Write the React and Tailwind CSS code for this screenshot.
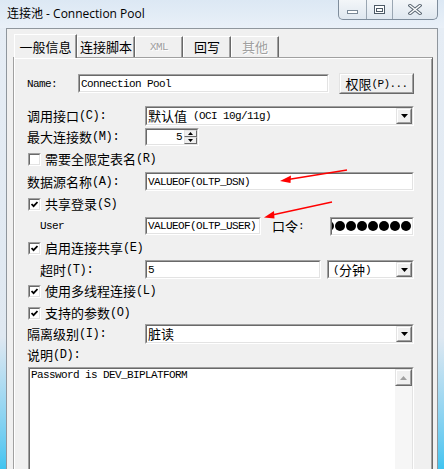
import React from "react";

const SUNKEN_OUT = "border border-t-[#a0a0a0] border-l-[#a0a0a0] border-b-white border-r-white";
const SUNKEN_IN = "border border-t-[#696969] border-l-[#696969] border-b-[#e3e3e3] border-r-[#e3e3e3]";
const RAISED_OUT = "border border-t-[#e3e3e3] border-l-[#e3e3e3] border-b-[#696969] border-r-[#696969]";
const RAISED_IN = "border border-t-white border-l-white border-b-[#a0a0a0] border-r-[#a0a0a0]";

const ZH = "text-[13px] leading-[16px] font-['Noto_Sans_CJK_SC',sans-serif]";
const EN = "text-[11px] leading-[16px] tracking-[-0.6px] font-['Liberation_Mono',monospace]";

function Lbl({ zh, tail }) {
  return (
    <span className="flex items-center whitespace-nowrap">
      <span className={ZH}>{zh}</span>
      <span className="text-[12px] leading-[16px] tracking-[-0.4px] font-['Liberation_Mono',monospace]">{tail}</span>
    </span>
  );
}

function Field({ className = "", inner = "", children }) {
  return (
    <div className={`${SUNKEN_OUT} shrink-0 ${className}`}>
      <div className={`h-full ${SUNKEN_IN} bg-white flex items-center overflow-hidden ${inner}`}>
        {children}
      </div>
    </div>
  );
}

function DropBtn() {
  return (
    <div className={`ml-auto w-[16px] h-full ${RAISED_OUT} bg-[#f0f0f0] shrink-0`}>
      <div className={`h-full ${RAISED_IN} flex items-center justify-center`}>
        <svg width="7" height="4" viewBox="0 0 7 4">
          <path d="M0 0h7L3.5 4z" fill="#000" />
        </svg>
      </div>
    </div>
  );
}

function Check({ checked }) {
  return (
    <Field className="w-[13px] h-[13px]" inner="justify-center">
      {checked && (
        <svg width="7" height="7" viewBox="0 0 7 7">
          <path d="M0.5 3 L2.6 5.2 L6.5 1" stroke="#000" strokeWidth="1.8" fill="none" />
        </svg>
      )}
    </Field>
  );
}

function CheckRow({ zh, tail, checked }) {
  return (
    <div className="h-[22px] flex items-center pl-[1px]">
      <Check checked={checked} />
      <span className="ml-[4px]">
        <Lbl zh={zh} tail={tail} />
      </span>
    </div>
  );
}

function Tab({ children, active, disabled, className = "" }) {
  return (
    <div
      className={`${className} flex items-center justify-center border-t border-l border-white border-r border-r-[#696969] shadow-[inset_-1px_0_0_#a0a0a0] bg-[#f0f0f0] ${
        active ? "h-[24px] -mb-[1px] z-10" : "h-[21px]"
      } ${disabled ? "text-[#a0a0a0]" : "text-black"}`}
    >
      {children}
    </div>
  );
}

export default function App() {
  return (
    <div className="relative w-[444px] h-[469px] overflow-hidden flex flex-col bg-[#e3ecf5] text-black">
      {/* title bar */}
      <div className="h-[28px] shrink-0 flex items-start bg-gradient-to-b from-[#dce8f4] to-[#e9f0f8]">
        <div className="pl-[7px] pt-[6px] text-[12px] leading-[16px] font-['Open_Sans','Noto_Sans_CJK_SC',sans-serif]">
          连接池 - Connection Pool
        </div>
        <div className="ml-auto mr-[6px] flex h-[20px] border border-t-0 border-[#7f8d9c] rounded-b-[5px] overflow-hidden bg-gradient-to-b from-[#f3f6f9] to-[#dfe7ef]">
          <div className="w-[28px] flex items-center justify-center border-r border-[#9aa6b2]">
            <svg width="11" height="5" viewBox="0 0 11 5" className="mt-[6px]">
              <rect x="0.5" y="0.5" width="10" height="3" fill="#fff" stroke="#7a8896" />
            </svg>
          </div>
          <div className="w-[26px] flex items-center justify-center border-r border-[#9aa6b2]">
            <svg width="11" height="9" viewBox="0 0 11 9">
              <rect x="0.5" y="0.5" width="10" height="8" fill="#fff" stroke="#4d5a66" />
              <rect x="2.5" y="3.5" width="6" height="3" fill="#fff" stroke="#4d5a66" />
            </svg>
          </div>
          <div className="w-[44px] flex items-center justify-center">
            <svg width="14" height="11" viewBox="0 0 14 11">
              <path d="M2 1.5 L12 9.5 M12 1.5 L2 9.5" stroke="#5c6874" strokeWidth="3.4" strokeLinecap="square" />
              <path d="M2 1.5 L12 9.5 M12 1.5 L2 9.5" stroke="#fff" strokeWidth="1.4" strokeLinecap="square" />
            </svg>
          </div>
        </div>
      </div>

      {/* body */}
      <div className="flex-1 flex min-h-0">
        <div className="w-[6px] shrink-0 bg-gradient-to-b from-[#e6edf5] via-[#dfe8f1] via-70% to-[#3ec4f0]" />

        <div className="w-[432px] shrink-0 bg-[#f0f0f0] border-x border-t border-[#8f969d] pt-[5px]">
          {/* tabs */}
          <div className="relative z-10 h-[23px] flex items-end ml-[7px]">
            <Tab active className={`w-[63px] ${ZH}`}>一般信息</Tab>
            <Tab className={`w-[58px] ${ZH}`}>连接脚本</Tab>
            <Tab disabled className={`w-[48px] ${EN} [text-shadow:1px_1px_0_#fff]`}>XML</Tab>
            <Tab className={`w-[48px] ${ZH}`}>回写</Tab>
            <Tab disabled className={`w-[48px] ${ZH} [text-shadow:1px_1px_0_#fff]`}>其他</Tab>
          </div>

          {/* panel */}
          <div className="ml-[6px] w-[420px] h-[430px] border border-t-[#a0a0a0] border-l-[#a0a0a0] border-b-[#696969] border-r-[#696969] shadow-[inset_1px_1px_0_#fff,inset_-1px_-1px_0_#a0a0a0] pl-[13px] pt-[16px] flex flex-col">
            {/* Name */}
            <div className="h-[19px] flex items-center">
              <span className={`w-[51px] ${EN}`}>Name:</span>
              <Field className="w-[251px] h-[19px]" inner="pl-[1px]">
                <span className={EN}>Connection Pool</span>
              </Field>
              <div className={`ml-[10px] w-[75px] h-[21px] ${RAISED_OUT} bg-[#f0f0f0]`}>
                <div className={`h-full ${RAISED_IN} flex items-center justify-center`}>
                  <span className={ZH}>权限</span>
                  <span className={EN}>(P)...</span>
                </div>
              </div>
            </div>

            <div className="h-[13px]" />

            {/* 调用接口 */}
            <div className="h-[20px] flex items-center">
              <span className="w-[118px]"><Lbl zh="调用接口" tail="(C):" /></span>
              <Field className="w-[269px] h-[20px]" inner="pl-[1px]">
                <span className={ZH}>默认值</span>
                <span className={`${EN} ml-[6px]`}>(OCI 10g/11g)</span>
                <DropBtn />
              </Field>
            </div>

            {/* 最大连接数 */}
            <div className="h-[22px] flex items-center">
              <span className="w-[118px]"><Lbl zh="最大连接数" tail="(M):" /></span>
              <Field className="w-[54px] h-[18px]" inner="justify-end">
                <span className={`${EN} mr-[2px]`}>5</span>
                <div className="w-[13px] h-full flex flex-col">
                  <div className={`flex-1 ${RAISED_OUT} bg-[#f0f0f0] flex items-center justify-center`}>
                    <svg width="5" height="3" viewBox="0 0 5 3"><path d="M0 3h5L2.5 0z" fill="#000" /></svg>
                  </div>
                  <div className={`flex-1 ${RAISED_OUT} bg-[#f0f0f0] flex items-center justify-center`}>
                    <svg width="5" height="3" viewBox="0 0 5 3"><path d="M0 0h5L2.5 3z" fill="#000" /></svg>
                  </div>
                </div>
              </Field>
            </div>

            <CheckRow zh="需要全限定表名" tail="(R)" />

            {/* 数据源名称 */}
            <div className="h-[23px] flex items-center">
              <span className="w-[118px]"><Lbl zh="数据源名称" tail="(A):" /></span>
              <Field className="w-[269px] h-[19px]" inner="pl-[1px]">
                <span className={EN}>VALUEOF(OLTP_DSN)</span>
              </Field>
            </div>

            <CheckRow zh="共享登录" tail="(S)" checked />

            {/* User / 口令 */}
            <div className="h-[22px] flex items-center">
              <span className={`w-[118px] pl-[13px] ${EN}`}>User</span>
              <Field className="w-[116px] h-[18px]" inner="pl-[1px]">
                <span className={EN}>VALUEOF(OLTP_USER)</span>
              </Field>
              <span className="ml-[11px] w-[58px] flex items-center">
                <span className={ZH}>口令</span>
                <span className={EN}>:</span>
              </span>
              <Field className="w-[84px] h-[19px]" inner="justify-end gap-[1px] pr-[1px]">
                {[0, 1, 2, 3, 4, 5, 6, 7].map((i) => (
                  <span key={i} className="w-[10px] h-[10px] rounded-full bg-black shrink-0" />
                ))}
              </Field>
            </div>

            <CheckRow zh="启用连接共享" tail="(E)" checked />

            {/* 超时 */}
            <div className="h-[21px] flex items-center">
              <span className="w-[118px] pl-[13px]"><Lbl zh="超时" tail="(T):" /></span>
              <Field className="w-[176px] h-[19px]" inner="pl-[1px]">
                <span className={EN}>5</span>
              </Field>
              <Field className="ml-[6px] w-[87px] h-[19px]" inner="pl-[4px]">
                <span className={EN}>(</span>
                <span className={ZH}>分钟</span>
                <span className={EN}>)</span>
                <DropBtn />
              </Field>
            </div>

            <CheckRow zh="使用多线程连接" tail="(L)" checked />
            <CheckRow zh="支持的参数" tail="(O)" checked />

            {/* 隔离级别 */}
            <div className="h-[20px] flex items-center">
              <span className="w-[118px]"><Lbl zh="隔离级别" tail="(I):" /></span>
              <Field className="w-[269px] h-[20px]" inner="pl-[1px]">
                <span className={ZH}>脏读</span>
                <DropBtn />
              </Field>
            </div>

            <div className="h-[22px] flex items-center">
              <Lbl zh="说明" tail="(D):" />
            </div>

            {/* 说明 textarea */}
            <Field className="mt-[1px] ml-[1px] w-[386px] h-[110px]" inner="items-stretch">
              <div className="flex-1 pl-[1px] pt-0">
                <div className="text-[11px] leading-[13px] tracking-[-0.6px] font-['Liberation_Mono',monospace]">
                  Password is DEV_BIPLATFORM
                </div>
              </div>
              <div className="w-[17px] flex flex-col bg-[#f6f6f6]">
                <div className={`h-[17px] ${RAISED_OUT} bg-[#f0f0f0]`}>
                  <div className={`h-full ${RAISED_IN} flex items-center justify-center`}>
                    <svg width="7" height="4" viewBox="0 0 7 4"><path d="M0 4h7L3.5 0z" fill="#a0a0a0" /></svg>
                  </div>
                </div>
              </div>
            </Field>
          </div>
        </div>

        <div className="flex-1 bg-gradient-to-b from-[#e6edf5] via-[#dfe8f1] via-70% to-[#3ec4f0]" />
      </div>

      {/* red annotation arrows */}
      <svg className="absolute inset-0 pointer-events-none" width="444" height="469" viewBox="0 0 444 469">
        <line x1="347" y1="170" x2="288" y2="179.5" stroke="#f00" strokeWidth="1.3" />
        <polygon points="280,181 291,175.5 290.5,183" fill="#f00" />
        <line x1="332" y1="202" x2="272" y2="215" stroke="#f00" strokeWidth="1.3" />
        <polygon points="264,217.5 274,211 274.5,218.5" fill="#f00" />
      </svg>
    </div>
  );
}
